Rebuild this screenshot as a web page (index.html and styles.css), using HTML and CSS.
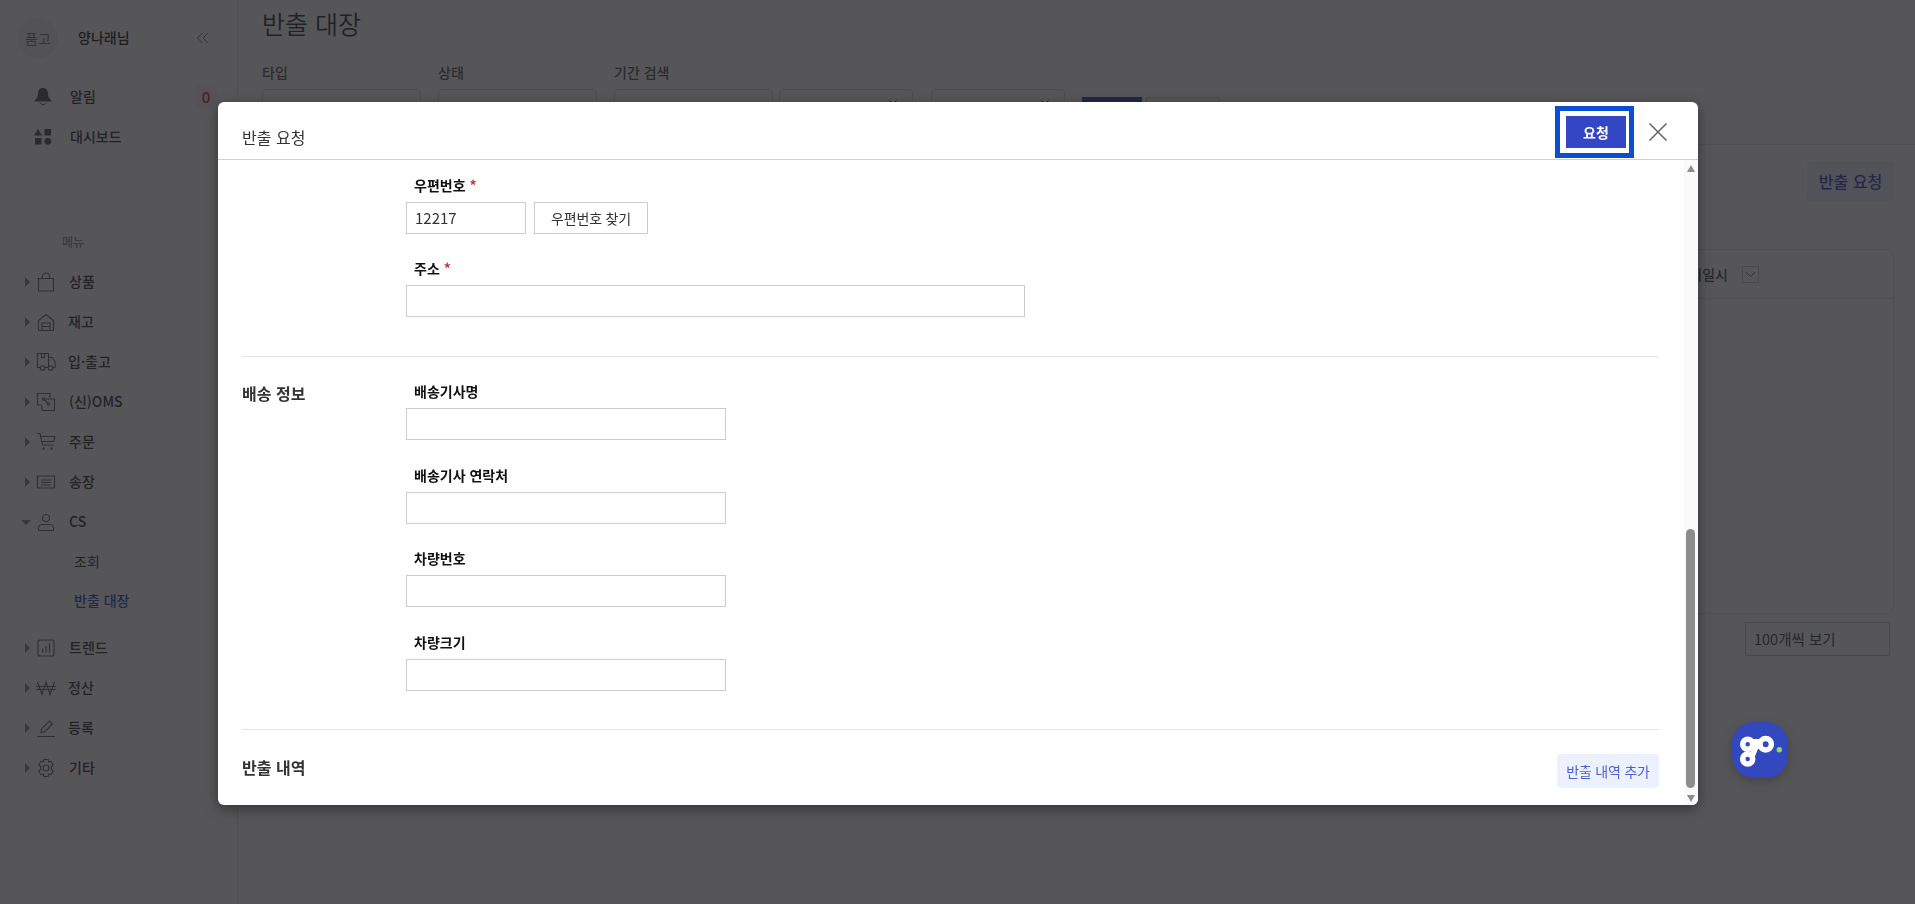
FILE: index.html
```html
<!DOCTYPE html>
<html lang="ko">
<head>
<meta charset="utf-8">
<title>반출 대장</title>
<link rel="stylesheet" href="styles.css">
</head>
<body>
<div class="app">
  <aside class="sidebar">
    <div class="profile">
      <div class="avatar">품고</div>
      <div class="username">양나래님</div>
      <svg class="collapse" width="14" height="14" viewBox="0 0 14 14"><path d="M6.500 2 1.500 7l5 5M12 2 7 7l5 5"/></svg>
    </div>
    <div class="toprow">
      <svg class="topicon" width="18" height="20" viewBox="0 0 18 20"><path class="fill" d="M9 1c3.300 0 5 2.400 5 5.500 0 3.500 1.200 5 3.500 7v1H.5v-1C2.800 11.500 4 10 4 6.500 4 3.400 5.700 1 9 1z"/><path d="M6.300 15.800a2.800 2.800 0 0 0 5.400 0"/></svg>
      <span>알림</span><span class="badge">0</span>
    </div>
    <div class="toprow">
      <svg class="topicon" width="18" height="18" viewBox="0 0 18 18"><path class="fill" d="M4 .8 8 7.500H0zM10.500 1H17v6.500h-6.500zM1 10h6.500v6.500H1z"/><circle class="fill" cx="13.800" cy="13.300" r="3.400"/></svg>
      <span>대시보드</span>
    </div>
    <div class="menutitle">메뉴</div>
    <nav class="menu">
      <div class="item"><i class="caret"></i><svg class="mi" viewBox="0 0 20 20"><path d="M2.500 6.500h15v12.500h-15zM6.500 6.500V4.500a3.500 3.500 0 0 1 7 0v2"/></svg><span>상품</span></div>
      <div class="item"><i class="caret"></i><svg class="mi" viewBox="0 0 20 20"><path d="M2.500 18.500V8.500L10 2.500l7.500 6v10zM6 18.500v-7.500h8v7.500M6 14.500h8"/></svg><span class="tight">재고</span></div>
      <div class="item"><i class="caret"></i><svg class="mi" viewBox="0 0 20 20"><path d="M4 15.500H1.500V1.500h11v14h-3.500M12.500 5.500h3.500l3 4v6h-2.500M5.500 1.500v4h3v-4"/><circle cx="6.500" cy="16" r="2.300"/><circle cx="14.500" cy="16" r="2.300"/></svg><span class="tight">입·출고</span></div>
      <div class="item"><i class="caret"></i><svg class="mi" viewBox="0 0 20 20"><path d="M6 13H1.500V1.500H14V6M6 7h12.500v11.500H6V14"/><circle cx="7.500" cy="7" r="1.200"/><circle cx="12.500" cy="12" r="1.200"/><path d="m8.500 8 3 3"/></svg><span>(신)OMS</span></div>
      <div class="item"><i class="caret"></i><svg class="mi" viewBox="0 0 20 20"><path d="M1 1.500h3l2.500 11.500h11M4.500 4.500h14.500l-1.500 5H6"/><circle cx="7.500" cy="16.500" r=".6"/><circle cx="15.500" cy="16.500" r=".6"/></svg><span>주문</span></div>
      <div class="item"><i class="caret"></i><svg class="mi" viewBox="0 0 20 20"><path d="M1.500 4h17v12h-17zM5 8h10M5 10.500h10M5 13h10"/></svg><span>송장</span></div>
      <div class="item"><i class="caret open"></i><svg class="mi" viewBox="0 0 20 20"><circle cx="10" cy="6" r="3.500"/><path d="M2.500 18.500v-2.500c0-2 2-3.500 4-3.500h7c2 0 4 1.500 4 3.500v2.500z"/></svg><span>CS</span></div>
      <div class="sub">
        <div class="subitem">조회</div>
        <div class="subitem active">반출 대장</div>
      </div>
      <div class="item"><i class="caret"></i><svg class="mi" viewBox="0 0 20 20"><rect x="2" y="2" width="16" height="16" rx="2"/><path d="M6.500 14.500v-4M10 14.500V8M13.500 14.500V5.500"/></svg><span>트렌드</span></div>
      <div class="item"><i class="caret"></i><svg class="mi" viewBox="0 0 20 20"><path d="M1.500 4 6 16.500 10 4l4 12.500L18.500 4M0 8.500h20M0 11.500h20"/></svg><span class="tight">정산</span></div>
      <div class="item"><i class="caret"></i><svg class="mi" viewBox="0 0 20 20"><path d="m5 14.500.8-3.800L13.500 3l3 3-7.700 7.700zM1 18.500h18"/></svg><span class="tight">등록</span></div>
      <div class="item"><i class="caret"></i><svg class="mi" viewBox="0 0 20 20"><path d="M8 1.500h4l.7 2.500 2.400-.7 2.100 3.400-1.800 1.800v3l1.800 1.800-2.100 3.400-2.400-.7-.7 2.500H8l-.7-2.500-2.400.7-2.100-3.400 1.800-1.800v-3L2.800 6.700l2.100-3.400 2.400.7z"/><circle cx="10" cy="10" r="3"/></svg><span>기타</span></div>
    </nav>
  </aside>
  <main class="main">
    <h1 class="pagetitle">반출 대장</h1>
    <div class="filters">
      <div class="filter"><label>타입</label><div class="select"></div></div>
      <div class="filter"><label>상태</label><div class="select"></div></div>
      <div class="filter wide"><label>기간 검색</label>
        <div class="dates">
          <div class="select date1"></div>
          <div class="select date2"><svg class="chev" width="8" height="5" viewBox="0 0 8 5"><path d="m.5.500 3.500 3.500L7.500.500"/></svg></div>
          <div class="select date3"><svg class="chev" width="8" height="5" viewBox="0 0 8 5"><path d="m.5.500 3.500 3.500L7.500.500"/></svg></div>
          <div class="searchbtn"></div>
          <div class="resetbtn"></div>
        </div>
      </div>
    </div>
    <div class="content">
      <div class="actions"><div class="reqbtn">반출 요청</div></div>
      <div class="tablecard">
        <div class="thead"><span>처리일시</span><i class="sortbox"><svg width="11" height="7" viewBox="0 0 11 7"><path d="m1 1 4.500 4.500L10 1"/></svg></i></div>
      </div>
      <div class="pager"><div class="pagesize">100개씩 보기</div></div>
    </div>
  </main>
</div>
<div class="overlay"></div>
<button class="gobtn" type="button" aria-label="go">
  <svg width="56" height="56" viewBox="0 0 56 56">
    <g class="gomark">
      <circle cx="15.700" cy="22.300" r="5"/>
      <circle cx="15.700" cy="37" r="5"/>
      <circle cx="33.700" cy="22.300" r="5.700"/>
    </g>
    <path class="gojoin" d="M20 17h9v10h-3l-3.500 8.500-5-3 3-7z"/>
    <circle class="godot" cx="47.300" cy="27.700" r="2.700"/>
  </svg>
</button>
<section class="modal">
  <header class="modalhead">
    <h2>반출 요청</h2>
    <div class="focusring"><button class="submit" type="button">요청</button></div>
    <svg class="close" width="20" height="20" viewBox="0 0 20 20"><path d="m1.500 1.500 17 17M18.500 1.500l-17 17"/></svg>
  </header>
  <div class="modalbody">
    <div class="scrollcontent">
      <div class="section first">
        <div class="sectitle"></div>
        <div class="fields">
          <div class="field"><label>우편번호 <em>*</em></label><div class="inline"><div class="input zip">12217</div><button class="findbtn" type="button">우편번호 찾기</button></div></div>
          <div class="field"><label>주소 <em>*</em></label><div class="input addr"></div></div>
        </div>
      </div>
      <div class="section">
        <div class="sectitle">배송 정보</div>
        <div class="fields">
          <div class="field"><label>배송기사명</label><div class="input"></div></div>
          <div class="field"><label>배송기사 연락처</label><div class="input"></div></div>
          <div class="field"><label>차량번호</label><div class="input"></div></div>
          <div class="field"><label>차량크기</label><div class="input"></div></div>
        </div>
      </div>
      <div class="section last">
        <div class="sectitle">반출 내역</div>
        <button class="addbtn" type="button">반출 내역 추가</button>
      </div>
    </div>
    <div class="scrollbar">
      <i class="arrow up"></i>
      <div class="track"><div class="thumb"></div></div>
      <i class="arrow down"></i>
    </div>
  </div>
</section>
</body>
</html>
```
FILE: styles.css
```css
* { box-sizing: border-box; }
html, body { margin: 0; height: 100%; overflow: hidden; }
body { background: #fff; color: #222; font-family: "Noto Sans CJK KR", "Noto Sans", sans-serif; font-size: 14px; }
button { font-family: inherit; cursor: pointer; }

.app { display: flex; height: 904px; }
.sidebar { width: 238px; flex: none; padding-top: 18px; border-right: 1px solid #e4e4e8; }
.profile { display: flex; align-items: center; height: 40px; padding-left: 18px; }
.avatar { width: 40px; height: 40px; border-radius: 50%; background: #f3f3f5; color: #777; font-size: 14px; line-height: 40px; text-align: center; }
.username { margin: 0 0 2px 20px; font-weight: 500; width: 118px; }
.collapse path { fill: none; stroke: #777; stroke-width: 1; }
.toprow { display: flex; align-items: center; height: 40px; padding-left: 34px; font-weight: 500; color: #333; position: relative; }
.profile + .toprow { margin-top: 19px; }
.toprow span:first-of-type { margin: 0 0 2px 18px; }
.topicon { flex: none; }
.topicon path { fill: none; stroke: #555; stroke-width: 1; }
.topicon .fill { fill: #555; stroke: none; }
.toprow .badge { position: absolute; left: 194px; top: 8px; width: 24px; height: 24px; border-radius: 7px; background: #fdeeee; color: #c03030; text-align: center; line-height: 24px; font-size: 15px; margin: 0; }
.menutitle { margin: 75px 0 10px 62px; height: 20px; line-height: 20px; font-size: 12px; font-weight: 500; color: #8f8f98; }
.menu { display: flex; flex-direction: column; }
.item { display: flex; align-items: center; height: 40px; padding-left: 25px; font-weight: 500; color: #333; }
.caret { width: 0; height: 0; border-style: solid; border-width: 5px 0 5px 5px; border-color: transparent transparent transparent #888; flex: none; }
.caret.open { border-width: 5px 5px 0 5px; border-color: #888 transparent transparent transparent; margin-left: -4px; margin-right: -1px; }
.mi { width: 20px; height: 20px; margin-left: 6px; flex: none; fill: none; stroke: #666; stroke-width: 1.100; }
.item span { margin: 0 0 2px 13px; }
.item span.tight { margin-left: 12px; }
.sub { padding-bottom: 8px; }
.subitem { height: 39px; line-height: 39px; padding-left: 74px; color: #333; }
.subitem.active { color: #3346c4; font-weight: 500; }

.main { flex: 1; min-width: 0; }
.pagetitle { margin: 0; height: 50px; line-height: 46px; padding-left: 24px; font-size: 25px; font-weight: 350; color: #333; }
.filters { display: flex; gap: 17px; padding-left: 24px; border-bottom: 1px solid #e4e4e8; height: 95px; padding-top: 12px; }
.filter { width: 159px; }
.filter.wide { width: auto; }
.filter label { display: block; height: 20px; line-height: 20px; margin-bottom: 7px; font-weight: 500; color: #555; }
.select { height: 40px; width: 159px; border: 1px solid #ddd; border-radius: 4px; position: relative; }
.chev { position: absolute; right: 15px; top: 10px; }
.chev path { fill: none; stroke: #333; }
.dates { display: flex; align-items: flex-start; }
.date1 { width: 159px; }
.date2 { width: 134px; margin-left: 6px; }
.date3 { width: 134px; margin-left: 18px; }
.searchbtn { width: 60px; height: 32px; background: #3346c4; margin: 8px 0 0 17px; }
.resetbtn { width: 73px; height: 32px; border: 1px solid #ccc; margin: 8px 0 0 4px; }
.content { padding: 16px 21px 0 24px; }
.actions { display: flex; justify-content: flex-end; }
.reqbtn { width: 87px; height: 40px; background: #edf1fd; color: #3346c4; border-radius: 4px; font-size: 16px; line-height: 40px; text-align: center; font-weight: 500; }
.tablecard { margin-top: 48px; height: 365px; border: 1px solid #e4e4e8; border-radius: 8px; }
.thead { height: 49px; border-bottom: 1px solid #e4e4e8; display: flex; align-items: center; justify-content: flex-end; padding-right: 134px; gap: 14px; font-weight: 500; color: #444; }
.sortbox { width: 17px; height: 17px; border: 1px solid #ccc; display: flex; align-items: center; justify-content: center; }
.sortbox path { fill: none; stroke: #888; }
.pager { display: flex; justify-content: flex-end; padding: 8px 4px 0 0; }
.pagesize { width: 145px; height: 34px; border: 1px solid #ccc; padding-left: 8px; font-size: 14.500px; line-height: 32px; color: #444; }

.overlay { position: fixed; inset: 0; background: rgba(29, 30, 34, .75); }

.gobtn { position: fixed; left: 1732px; top: 722px; width: 56px; height: 56px; padding: 0; border: 0; border-radius: 22px; background: #3347bf; box-shadow: 0 4px 12px rgba(0,0,0,.2); }
.gobtn svg { display: block; }
.gomark circle { fill: none; stroke: #fff; stroke-width: 5.500; }
.gojoin { fill: #fff; }
.godot { fill: #8fdc5a; }

.modal { position: fixed; left: 218px; top: 102px; width: 1480px; height: 703px; background: #fff; border-radius: 6px; box-shadow: 0 4px 14px rgba(0,0,0,.4); display: flex; flex-direction: column; overflow: hidden; }
.modalhead { flex: none; height: 58px; border-bottom: 1px solid #d0d0d2; display: flex; align-items: center; padding: 3px 30px 0 24px; position: relative; }
.modalhead h2 { margin: 9px auto 0 0; font-size: 16px; font-weight: 400; color: #333; }
.focusring { border: 5px solid #0b4fd0; padding: 5px 3px 5px 6px; margin: -1px 14px 0 0; height: 52px; }
.submit { display: block; width: 60px; height: 32px; padding: 0; border: 0; background: #3346c4; color: #fff; font-size: 14px; font-weight: 700; }
.close { margin-top: -1px; }
.close path { fill: none; stroke: #666; stroke-width: 1.600; }

.modalbody { flex: 1; display: flex; min-height: 0; }
.scrollcontent { flex: 1; min-width: 0; overflow: hidden; padding: 0 25px 0 24px; }
.section { display: flex; padding: 23px 0 38.500px; border-bottom: 1px solid #e4e4ec; }
.section.first { padding-top: 14px; padding-bottom: 39px; }
.section.first .fields { gap: 23px; }
.section.last { border-bottom: 0; padding-top: 24px; justify-content: space-between; }
.sectitle { width: 164px; flex: none; font-size: 16px; font-weight: 700; color: #333; line-height: 26px; }
.section.last .sectitle { width: auto; }
.fields { display: flex; flex-direction: column; gap: 23.600px; }
.field label { display: block; height: 20px; line-height: 22px; margin: 0 0 8px 8px; font-weight: 700; color: #111; }
.field label em { color: #d03030; font-style: normal; }
.inline { display: flex; gap: 8px; }
.input { width: 320px; height: 32px; border: 1px solid #ccc; background: #fff; font-size: 15px; line-height: 30px; padding-left: 8px; color: #333; }
.input.zip { width: 120px; }
.input.addr { width: 619px; }
.findbtn { width: 114px; height: 32px; padding: 0; border: 1px solid #ccc; background: #fff; color: #333; font-size: 14px; letter-spacing: -.2px; }
.addbtn { width: 102px; height: 34px; padding: 0; border: 0; border-radius: 4px; background: #edf1fd; color: #4a5fd8; font-size: 14px; letter-spacing: -.2px; }

.scrollbar { width: 14px; flex: none; margin-right: 0; background: #fafafa; display: flex; flex-direction: column; align-items: center; padding: 5px 3px 3px 2px; }
.arrow { flex: none; width: 0; height: 0; border-style: solid; }
.arrow.up { border-width: 0 4.500px 7px 4.500px; border-color: transparent transparent #8c8c8c transparent; }
.arrow.down { border-width: 7px 4.500px 0 4.500px; border-color: #8c8c8c transparent transparent transparent; }
.track { flex: 1; width: 9px; display: flex; flex-direction: column; justify-content: flex-end; padding-bottom: 7px; }
.thumb { height: 259px; background: #8c8c8c; border-radius: 5px; }
```
